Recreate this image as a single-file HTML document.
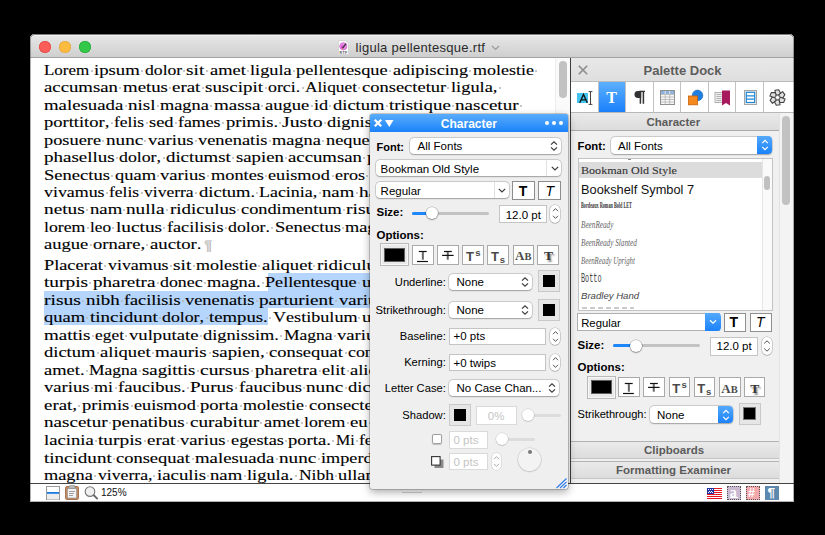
<!DOCTYPE html>
<html><head><meta charset="utf-8">
<style>
*{box-sizing:border-box;margin:0;padding:0}
html,body{width:825px;height:535px;overflow:hidden;background:#000}
body{position:relative;font-family:"Liberation Sans",sans-serif;font-size:11.5px;color:#000}
.a{position:absolute}
#win{position:absolute;left:30px;top:34px;width:764px;height:468px;background:#fff;border-radius:5px 5px 0 0;overflow:hidden}
#winedge{position:absolute;left:30px;top:34px;width:764px;height:468px;border-radius:5px 5px 0 0;box-shadow:inset 0 0 0 1px rgba(0,0,0,0.3);pointer-events:none}
#title{position:absolute;left:30px;top:34px;width:764px;height:24px;background:linear-gradient(#e8e8e8,#cfcfcf);border-bottom:1px solid #a3a3a3;border-radius:5px 5px 0 0;box-shadow:inset 0 1px 0 #b4b4b4,inset 0 2px 0 #f3f3f3}
.tl{position:absolute;top:41px;width:12px;height:12px;border-radius:50%}
#doc{position:absolute;left:0;top:0;width:825px;height:535px;overflow:hidden;clip-path:polygon(31px 58px,555px 58px,555px 483px,31px 483px)}
.ln{position:absolute;left:0;width:825px;height:17.5px;font-family:"Liberation Serif",serif;font-size:15px;line-height:17.5px;color:#000;font-kerning:none;-webkit-text-stroke:0.12px #000}
.ln .w{position:absolute;top:0;white-space:pre;transform-origin:0 0}
.ln s{position:absolute;top:8px;width:2px;height:2px;background:#b4b4b4;border-radius:1px}
.hl{position:absolute;background:#b5d5fc}
/* dock */
.hdr{position:absolute;background:linear-gradient(#eaeaea,#dcdcdc);border-bottom:1px solid #ababab;text-align:center;font-weight:bold;color:#5b5b5b}
.tb{position:absolute;top:82px;height:30px;background:#fff;border-right:1px solid #c3c3c3}
.lbl{position:absolute;white-space:pre;line-height:1}
.b{font-weight:bold}
.pop{position:absolute;background:#fff;border-radius:4px;box-shadow:0 0 0 0.5px rgba(0,0,0,0.22),0 0.5px 1.5px rgba(0,0,0,0.25)}
.fld{position:absolute;background:#fff;box-shadow:inset 0 0 0 1px #c4c4c4,inset 0 1px 0 #b4b4b4}
.btn{position:absolute;background:#fff;border-radius:2px;box-shadow:0 0 0 0.5px rgba(0,0,0,0.25),0 0.5px 1px rgba(0,0,0,0.2)}
.well{position:absolute;background:#e6e6e6;box-shadow:inset 0 0 0 1px #c9c9c9}
.well i{position:absolute;background:#000;box-shadow:0 0 0 1px #777}
.blue{position:absolute;background:linear-gradient(#54a9fb,#1b82fb);border-radius:0 4px 4px 0}
.trk{position:absolute;height:3px;border-radius:2px;background:#c3c3c3}
.knob{position:absolute;width:12px;height:12px;border-radius:50%;background:#fff;box-shadow:0 0 0 0.5px rgba(0,0,0,0.3),0 1px 1.5px rgba(0,0,0,0.3)}
.step{position:absolute;background:#fff;border-radius:5px;box-shadow:0 0 0 0.5px rgba(0,0,0,0.25),0 0.5px 1px rgba(0,0,0,0.2)}
svg{position:absolute;overflow:visible}
</style></head><body>
<div id="win"></div>
<div id="title"></div>
<div class="tl" style="left:39px;background:#fc5d58;box-shadow:inset 0 0 0 0.6px #e0443e"></div>
<div class="tl" style="left:59px;background:#fdbc40;box-shadow:inset 0 0 0 0.6px #dea236"></div>
<div class="tl" style="left:79px;background:#34c84a;box-shadow:inset 0 0 0 0.6px #1ea62f"></div>
<!-- title -->
<svg style="left:337.5px;top:39.5px" width="11" height="15" viewBox="0 0 11 15">
  <path d="M0.5 0.5h7l3 3v11h-10z" fill="#fdfdfd" stroke="#cfcfcf" stroke-width="0.8"/>
  <circle cx="5.3" cy="6.3" r="3.6" fill="#e68de6" stroke="#d46ad6" stroke-width="0.8"/>
  <circle cx="4.5" cy="7" r="1.8" fill="#e04fd8"/>
  <path d="M8 3.6L4.4 8.4" stroke="#3a3a3a" stroke-width="1.4"/>
  <path d="M4.6 8.2L3.8 9.2" stroke="#c9a64a" stroke-width="1"/>
  <text x="5.5" y="13.6" font-size="3.6" font-weight="bold" text-anchor="middle" fill="#555" font-family="Liberation Sans" letter-spacing="0.3">RTF</text>
</svg>
<div class="lbl" style="left:355.5px;top:41px;font-size:13px;color:#2a2a2a;letter-spacing:0.3px">ligula pellentesque.rtf</div>
<svg style="left:491px;top:45px" width="9" height="6" viewBox="0 0 9 6"><path d="M1 1l3.5 3.5L8 1" fill="none" stroke="#9a9a9a" stroke-width="1.2"/></svg>

<div id="doc">
<div class="hl" style="left:267.6px;top:273px;width:288px;height:17.6px"></div>
<div class="hl" style="left:43.7px;top:290.6px;width:512px;height:17.4px"></div>
<div class="hl" style="left:43.7px;top:308px;width:224px;height:17.4px"></div>
<div class="ln" style="top:61.80px"><span class="w" style="left:44.00px;transform:scaleX(1.1311)">Lorem</span><s style="left:90.59px"></s><span class="w" style="left:93.96px;transform:scaleX(1.2489)">ipsum</span><s style="left:141.14px"></s><span class="w" style="left:144.50px;transform:scaleX(1.1760)">dolor</span><s style="left:183.11px"></s><span class="w" style="left:186.48px;transform:scaleX(1.2918)">sit</span><s style="left:206.17px"></s><span class="w" style="left:209.54px;transform:scaleX(1.2268)">amet</span><s style="left:246.67px"></s><span class="w" style="left:250.03px;transform:scaleX(1.2197)">ligula</span><s style="left:293.08px"></s><span class="w" style="left:296.44px;transform:scaleX(1.2221)">pellentesque</span><s style="left:389.44px"></s><span class="w" style="left:392.81px;transform:scaleX(1.2178)">adipiscing</span><s style="left:469.26px"></s><span class="w" style="left:472.62px;transform:scaleX(1.1980)">molestie</span><s style="left:534.88px"></s></div>
<div class="ln" style="top:79.25px"><span class="w" style="left:44.00px;transform:scaleX(1.2496)">accumsan</span><s style="left:119.26px"></s><span class="w" style="left:122.63px;transform:scaleX(1.2535)">metus</span><s style="left:168.93px"></s><span class="w" style="left:172.29px;transform:scaleX(1.2621)">erat</span><s style="left:202.03px"></s><span class="w" style="left:205.40px;transform:scaleX(1.2638)">suscipit</span><s style="left:264.70px"></s><span class="w" style="left:268.06px;transform:scaleX(1.1899)">orci.</span><s style="left:301.65px"></s><span class="w" style="left:305.01px;transform:scaleX(1.1561)">Aliquet</span><s style="left:358.41px"></s><span class="w" style="left:361.77px;transform:scaleX(1.2332)">consectetur</span><s style="left:447.38px"></s><span class="w" style="left:450.75px;transform:scaleX(1.2238)">ligula,</span><s style="left:498.52px"></s></div>
<div class="ln" style="top:96.70px"><span class="w" style="left:44.00px;transform:scaleX(1.2513)">malesuada</span><s style="left:124.59px"></s><span class="w" style="left:127.95px;transform:scaleX(1.2676)">nisl</span><s style="left:156.81px"></s><span class="w" style="left:160.17px;transform:scaleX(1.2198)">magna</span><s style="left:210.31px"></s><span class="w" style="left:213.67px;transform:scaleX(1.2655)">massa</span><s style="left:261.45px"></s><span class="w" style="left:264.81px;transform:scaleX(1.2376)">augue</span><s style="left:310.52px"></s><span class="w" style="left:313.88px;transform:scaleX(1.2156)">id</span><s style="left:329.44px"></s><span class="w" style="left:332.80px;transform:scaleX(1.2343)">dictum</span><s style="left:385.60px"></s><span class="w" style="left:388.97px;transform:scaleX(1.2564)">tristique</span><s style="left:452.11px"></s><span class="w" style="left:455.48px;transform:scaleX(1.2715)">nascetur</span><s style="left:520.39px"></s></div>
<div class="ln" style="top:114.15px"><span class="w" style="left:44.00px;transform:scaleX(1.2344)">porttitor,</span><s style="left:110.69px"></s><span class="w" style="left:114.06px;transform:scaleX(1.1674)">felis</span><s style="left:145.57px"></s><span class="w" style="left:148.94px;transform:scaleX(1.2267)">sed</span><s style="left:174.84px"></s><span class="w" style="left:178.20px;transform:scaleX(1.1881)">fames</span><s style="left:222.13px"></s><span class="w" style="left:225.50px;transform:scaleX(1.2359)">primis.</span><s style="left:278.89px"></s><span class="w" style="left:282.25px;transform:scaleX(1.3130)">Justo</span><s style="left:324.12px"></s><span class="w" style="left:327.48px;transform:scaleX(1.2207)">dignissim</span><s style="left:400.08px"></s><span class="w" style="left:403.45px;transform:scaleX(1.2768)">nunc</span><s style="left:442.06px"></s></div>
<div class="ln" style="top:131.60px"><span class="w" style="left:44.00px;transform:scaleX(1.2228)">posuere</span><s style="left:102.42px"></s><span class="w" style="left:105.78px;transform:scaleX(1.2768)">nunc</span><s style="left:144.39px"></s><span class="w" style="left:147.76px;transform:scaleX(1.2413)">varius</span><s style="left:194.64px"></s><span class="w" style="left:198.01px;transform:scaleX(1.2261)">venenatis</span><s style="left:268.84px"></s><span class="w" style="left:272.20px;transform:scaleX(1.2198)">magna</span><s style="left:322.34px"></s><span class="w" style="left:325.71px;transform:scaleX(1.2211)">neque</span><s style="left:370.82px"></s><span class="w" style="left:374.19px;transform:scaleX(1.2494)">sapien</span><s style="left:423.44px"></s></div>
<div class="ln" style="top:149.05px"><span class="w" style="left:44.00px;transform:scaleX(1.2655)">phasellus</span><s style="left:116.01px"></s><span class="w" style="left:119.38px;transform:scaleX(1.1850)">dolor,</span><s style="left:162.72px"></s><span class="w" style="left:166.08px;transform:scaleX(1.2528)">dictumst</span><s style="left:232.18px"></s><span class="w" style="left:235.55px;transform:scaleX(1.2494)">sapien</span><s style="left:284.80px"></s><span class="w" style="left:288.17px;transform:scaleX(1.2496)">accumsan</span><s style="left:363.43px"></s><span class="w" style="left:366.80px;transform:scaleX(1.3032)">purus</span><s style="left:411.61px"></s></div>
<div class="ln" style="top:166.50px"><span class="w" style="left:44.00px;transform:scaleX(1.2361)">Senectus</span><s style="left:111.28px"></s><span class="w" style="left:114.65px;transform:scaleX(1.2328)">quam</span><s style="left:157.10px"></s><span class="w" style="left:160.47px;transform:scaleX(1.2413)">varius</span><s style="left:207.35px"></s><span class="w" style="left:210.72px;transform:scaleX(1.2208)">montes</span><s style="left:265.00px"></s><span class="w" style="left:268.36px;transform:scaleX(1.2151)">euismod</span><s style="left:331.51px"></s><span class="w" style="left:334.87px;transform:scaleX(1.2060)">eros</span><s style="left:366.39px"></s><span class="w" style="left:369.75px;transform:scaleX(1.2768)">nunc</span><s style="left:408.36px"></s></div>
<div class="ln" style="top:183.95px"><span class="w" style="left:44.00px;transform:scaleX(1.1918)">vivamus</span><s style="left:105.96px"></s><span class="w" style="left:109.33px;transform:scaleX(1.1674)">felis</span><s style="left:140.84px"></s><span class="w" style="left:144.21px;transform:scaleX(1.1689)">viverra</span><s style="left:195.23px"></s><span class="w" style="left:198.60px;transform:scaleX(1.2365)">dictum.</span><s style="left:256.13px"></s><span class="w" style="left:259.49px;transform:scaleX(1.1949)">Lacinia,</span><s style="left:319.09px"></s><span class="w" style="left:322.46px;transform:scaleX(1.2475)">nam</span><s style="left:356.04px"></s><span class="w" style="left:359.41px;transform:scaleX(1.2845)">habitant</span><s style="left:422.85px"></s></div>
<div class="ln" style="top:201.40px"><span class="w" style="left:44.00px;transform:scaleX(1.2880)">netus</span><s style="left:86.16px"></s><span class="w" style="left:89.52px;transform:scaleX(1.2475)">nam</span><s style="left:123.11px"></s><span class="w" style="left:126.47px;transform:scaleX(1.2809)">nulla</span><s style="left:166.27px"></s><span class="w" style="left:169.63px;transform:scaleX(1.2612)">ridiculus</span><s style="left:237.21px"></s><span class="w" style="left:240.57px;transform:scaleX(1.2218)">condimentum</span><s style="left:342.74px"></s><span class="w" style="left:346.10px;transform:scaleX(1.3036)">risus</span><s style="left:384.42px"></s><span class="w" style="left:387.78px;transform:scaleX(1.2198)">magna</span><s style="left:437.92px"></s></div>
<div class="ln" style="top:218.85px"><span class="w" style="left:44.00px;transform:scaleX(1.1824)">lorem</span><s style="left:86.75px"></s><span class="w" style="left:90.11px;transform:scaleX(1.1451)">leo</span><s style="left:112.47px"></s><span class="w" style="left:115.83px;transform:scaleX(1.2865)">luctus</span><s style="left:163.31px"></s><span class="w" style="left:166.67px;transform:scaleX(1.2101)">facilisis</span><s style="left:224.50px"></s><span class="w" style="left:227.86px;transform:scaleX(1.1850)">dolor.</span><s style="left:271.20px"></s><span class="w" style="left:274.57px;transform:scaleX(1.2361)">Senectus</span><s style="left:341.85px"></s><span class="w" style="left:345.22px;transform:scaleX(1.2198)">magna</span><s style="left:395.36px"></s></div>
<div class="ln" style="top:236.30px"><span class="w" style="left:44.00px;transform:scaleX(1.2376)">augue</span><s style="left:89.70px"></s><span class="w" style="left:93.07px;transform:scaleX(1.2369)">ornare,</span><s style="left:146.46px"></s><span class="w" style="left:149.82px;transform:scaleX(1.2474)">auctor.</span><span class="w" style="left:204.2px;top:0.5px;font-family:'Liberation Sans';font-weight:bold;font-size:14px;color:#d2d2d2">&#182;</span></div>
<div class="ln" style="top:256.70px"><span class="w" style="left:44.00px;transform:scaleX(1.2176)">Placerat</span><s style="left:104.19px"></s><span class="w" style="left:107.55px;transform:scaleX(1.1918)">vivamus</span><s style="left:169.52px"></s><span class="w" style="left:172.88px;transform:scaleX(1.2918)">sit</span><s style="left:192.57px"></s><span class="w" style="left:195.94px;transform:scaleX(1.1980)">molestie</span><s style="left:258.20px"></s><span class="w" style="left:261.56px;transform:scaleX(1.2381)">aliquet</span><s style="left:313.47px"></s><span class="w" style="left:316.84px;transform:scaleX(1.2612)">ridiculus</span><s style="left:384.42px"></s></div>
<div class="ln" style="top:274.23px"><span class="w" style="left:44.00px;transform:scaleX(1.2889)">turpis</span><s style="left:89.41px"></s><span class="w" style="left:92.77px;transform:scaleX(1.2692)">pharetra</span><s style="left:156.51px"></s><span class="w" style="left:159.88px;transform:scaleX(1.1881)">donec</span><s style="left:203.81px"></s><span class="w" style="left:207.17px;transform:scaleX(1.2234)">magna.</span><s style="left:262.04px"></s><span class="w" style="left:265.40px;transform:scaleX(1.2085)">Pellentesque</span><s style="left:358.41px"></s><span class="w" style="left:361.77px;transform:scaleX(1.2519)">ultrices</span><s style="left:418.41px"></s></div>
<div class="ln" style="top:291.76px"><span class="w" style="left:44.00px;transform:scaleX(1.3036)">risus</span><s style="left:82.31px"></s><span class="w" style="left:85.68px;transform:scaleX(1.2634)">nibh</span><s style="left:120.74px"></s><span class="w" style="left:124.11px;transform:scaleX(1.2101)">facilisis</span><s style="left:181.93px"></s><span class="w" style="left:185.30px;transform:scaleX(1.2261)">venenatis</span><s style="left:256.13px"></s><span class="w" style="left:259.49px;transform:scaleX(1.2774)">parturient</span><s style="left:335.35px"></s><span class="w" style="left:338.71px;transform:scaleX(1.2413)">varius</span><s style="left:385.60px"></s></div>
<div class="ln" style="top:309.29px"><span class="w" style="left:44.00px;transform:scaleX(1.2328)">quam</span><s style="left:86.45px"></s><span class="w" style="left:89.82px;transform:scaleX(1.2694)">tincidunt</span><s style="left:158.88px"></s><span class="w" style="left:162.24px;transform:scaleX(1.1850)">dolor,</span><s style="left:205.58px"></s><span class="w" style="left:208.94px;transform:scaleX(1.2491)">tempus.</span><s style="left:269.13px"></s><span class="w" style="left:272.50px;transform:scaleX(1.2077)">Vestibulum</span><s style="left:358.41px"></s><span class="w" style="left:361.77px;transform:scaleX(1.2519)">ultrices</span><s style="left:418.41px"></s></div>
<div class="ln" style="top:326.82px"><span class="w" style="left:44.00px;transform:scaleX(1.2655)">mattis</span><s style="left:91.77px"></s><span class="w" style="left:95.14px;transform:scaleX(1.1595)">eget</span><s style="left:125.47px"></s><span class="w" style="left:128.84px;transform:scaleX(1.2443)">vulputate</span><s style="left:199.67px"></s><span class="w" style="left:203.03px;transform:scaleX(1.2232)">dignissim.</span><s style="left:280.37px"></s><span class="w" style="left:283.73px;transform:scaleX(1.1638)">Magna</span><s style="left:333.57px"></s><span class="w" style="left:336.94px;transform:scaleX(1.2413)">varius</span><s style="left:383.83px"></s></div>
<div class="ln" style="top:344.35px"><span class="w" style="left:44.00px;transform:scaleX(1.2343)">dictum</span><s style="left:96.80px"></s><span class="w" style="left:100.16px;transform:scaleX(1.2381)">aliquet</span><s style="left:152.08px"></s><span class="w" style="left:155.44px;transform:scaleX(1.2670)">mauris</span><s style="left:208.54px"></s><span class="w" style="left:211.90px;transform:scaleX(1.2505)">sapien,</span><s style="left:265.88px"></s><span class="w" style="left:269.25px;transform:scaleX(1.2320)">consequat</span><s style="left:344.51px"></s><span class="w" style="left:347.88px;transform:scaleX(1.1871)">congue</span><s style="left:400.68px"></s></div>
<div class="ln" style="top:361.88px"><span class="w" style="left:44.00px;transform:scaleX(1.2307)">amet.</span><s style="left:85.86px"></s><span class="w" style="left:89.23px;transform:scaleX(1.1638)">Magna</span><s style="left:139.07px"></s><span class="w" style="left:142.43px;transform:scaleX(1.2515)">sagittis</span><s style="left:197.01px"></s><span class="w" style="left:200.37px;transform:scaleX(1.2957)">cursus</span><s style="left:251.40px"></s><span class="w" style="left:254.76px;transform:scaleX(1.2692)">pharetra</span><s style="left:318.50px"></s><span class="w" style="left:321.86px;transform:scaleX(1.2181)">elit</span><s style="left:346.58px"></s><span class="w" style="left:349.95px;transform:scaleX(1.2355)">aliquam</span><s style="left:411.02px"></s></div>
<div class="ln" style="top:379.41px"><span class="w" style="left:44.00px;transform:scaleX(1.2413)">varius</span><s style="left:90.89px"></s><span class="w" style="left:94.25px;transform:scaleX(1.1941)">mi</span><s style="left:114.54px"></s><span class="w" style="left:117.90px;transform:scaleX(1.2403)">faucibus.</span><s style="left:186.96px"></s><span class="w" style="left:190.32px;transform:scaleX(1.2710)">Purus</span><s style="left:235.14px"></s><span class="w" style="left:238.50px;transform:scaleX(1.2387)">faucibus</span><s style="left:302.83px"></s><span class="w" style="left:306.20px;transform:scaleX(1.2768)">nunc</span><s style="left:344.81px"></s><span class="w" style="left:348.17px;transform:scaleX(1.2343)">dictum</span><s style="left:400.97px"></s></div>
<div class="ln" style="top:396.94px"><span class="w" style="left:44.00px;transform:scaleX(1.2620)">erat,</span><s style="left:78.47px"></s><span class="w" style="left:81.84px;transform:scaleX(1.2335)">primis</span><s style="left:130.50px"></s><span class="w" style="left:133.86px;transform:scaleX(1.2151)">euismod</span><s style="left:197.01px"></s><span class="w" style="left:200.37px;transform:scaleX(1.2369)">porta</span><s style="left:239.87px"></s><span class="w" style="left:243.23px;transform:scaleX(1.1980)">molestie</span><s style="left:305.49px"></s><span class="w" style="left:308.86px;transform:scaleX(1.2332)">consectetur</span><s style="left:394.47px"></s></div>
<div class="ln" style="top:414.47px"><span class="w" style="left:44.00px;transform:scaleX(1.2715)">nascetur</span><s style="left:108.92px"></s><span class="w" style="left:112.28px;transform:scaleX(1.2647)">penatibus</span><s style="left:186.37px"></s><span class="w" style="left:189.73px;transform:scaleX(1.2776)">curabitur</span><s style="left:260.27px"></s><span class="w" style="left:263.63px;transform:scaleX(1.2268)">amet</span><s style="left:300.76px"></s><span class="w" style="left:304.13px;transform:scaleX(1.1824)">lorem</span><s style="left:346.88px"></s><span class="w" style="left:350.24px;transform:scaleX(1.2515)">eu</span><s style="left:369.34px"></s></div>
<div class="ln" style="top:432.00px"><span class="w" style="left:44.00px;transform:scaleX(1.2420)">lacinia</span><s style="left:95.03px"></s><span class="w" style="left:98.39px;transform:scaleX(1.2889)">turpis</span><s style="left:143.80px"></s><span class="w" style="left:147.16px;transform:scaleX(1.2621)">erat</span><s style="left:176.91px"></s><span class="w" style="left:180.27px;transform:scaleX(1.2413)">varius</span><s style="left:227.16px"></s><span class="w" style="left:230.52px;transform:scaleX(1.2212)">egestas</span><s style="left:284.80px"></s><span class="w" style="left:288.17px;transform:scaleX(1.2396)">porta.</span><s style="left:332.39px"></s><span class="w" style="left:335.76px;transform:scaleX(1.0632)">Mi</span><s style="left:355.74px"></s><span class="w" style="left:359.11px;transform:scaleX(1.1674)">felis</span><s style="left:390.63px"></s></div>
<div class="ln" style="top:449.53px"><span class="w" style="left:44.00px;transform:scaleX(1.2694)">tincidunt</span><s style="left:113.06px"></s><span class="w" style="left:116.42px;transform:scaleX(1.2320)">consequat</span><s style="left:191.69px"></s><span class="w" style="left:195.05px;transform:scaleX(1.2513)">malesuada</span><s style="left:275.64px"></s><span class="w" style="left:279.00px;transform:scaleX(1.2768)">nunc</span><s style="left:317.61px"></s><span class="w" style="left:320.98px;transform:scaleX(1.2136)">imperdiet</span><s style="left:392.10px"></s></div>
<div class="ln" style="top:467.06px"><span class="w" style="left:44.00px;transform:scaleX(1.2198)">magna</span><s style="left:94.14px"></s><span class="w" style="left:97.50px;transform:scaleX(1.1764)">viverra,</span><s style="left:153.26px"></s><span class="w" style="left:156.62px;transform:scaleX(1.2532)">iaculis</span><s style="left:207.06px"></s><span class="w" style="left:210.42px;transform:scaleX(1.2475)">nam</span><s style="left:244.01px"></s><span class="w" style="left:247.37px;transform:scaleX(1.2238)">ligula.</span><s style="left:295.15px"></s><span class="w" style="left:298.51px;transform:scaleX(1.1627)">Nibh</span><s style="left:334.76px"></s><span class="w" style="left:338.12px;transform:scaleX(1.2196)">ullamcorper</span><s style="left:427.87px"></s></div>
</div>
<!-- doc scrollbar -->
<div class="a" style="left:555px;top:58px;width:15px;height:425px;background:#fafafa;border-left:1px solid #ededed"></div>
<div class="a" style="left:559px;top:61px;width:8px;height:37px;border-radius:4px;background:#c2c2c2"></div>
<div class="a" style="left:570px;top:58px;width:1px;height:425px;background:#3c3c3c"></div>

<!-- DOCK -->
<div class="a" style="left:571px;top:58px;width:223px;height:425px;background:#f0f0f0"></div>
<div class="hdr" style="left:571px;top:58px;width:223px;height:24px;background:linear-gradient(#e8e8e8,#dfdfdf);border-bottom:1px solid #b9b9b9"></div>
<div class="lbl b" style="left:643.5px;top:63.6px;font-size:13px;color:#5d5d5d">Palette Dock</div>
<svg style="left:578px;top:65px" width="10" height="10" viewBox="0 0 10 10"><path d="M0.8 0.8L9.2 9.2M9.2 0.8L0.8 9.2" stroke="#8c8c8c" stroke-width="1.6"/></svg>
<div class="a" style="left:571px;top:81px;width:223px;height:1px;background:#bcbcbc"></div>
<div class="a" style="left:571px;top:82px;width:223px;height:30px;background:#fff"></div>
<div class="a" style="left:598px;top:82px;width:1px;height:30px;background:#c2c2c2"></div>
<div class="a" style="left:625px;top:82px;width:1px;height:30px;background:#c2c2c2"></div>
<div class="a" style="left:653px;top:82px;width:1px;height:30px;background:#c2c2c2"></div>
<div class="a" style="left:680px;top:82px;width:1px;height:30px;background:#c2c2c2"></div>
<div class="a" style="left:708px;top:82px;width:1px;height:30px;background:#c2c2c2"></div>
<div class="a" style="left:735px;top:82px;width:1px;height:30px;background:#c2c2c2"></div>
<div class="a" style="left:763px;top:82px;width:1px;height:30px;background:#c2c2c2"></div>
<div class="a" style="left:599px;top:82px;width:26px;height:30px;background:linear-gradient(#5cb0fc,#1a80fb)"></div>
<!-- 1: A with cursor -->
<div class="a" style="left:577px;top:93px;width:11px;height:10px;background:#42c6f1"></div>
<svg style="left:579px;top:93.5px" width="9" height="9" viewBox="0 0 9 9"><path d="M0.7 8.7L4.5 0.4L8.3 8.7M2.1 5.9h4.8" fill="none" stroke="#151515" stroke-width="1.35"/></svg>
<svg style="left:588px;top:91px" width="5" height="14" viewBox="0 0 5 14"><path d="M0.6 0.6h3.8M2.5 0.6v12.8M0.6 13.4h3.8" fill="none" stroke="#3a3a3a" stroke-width="0.95"/></svg>
<!-- 2: T -->
<div class="lbl" style="left:606.3px;top:90px;font-family:'Liberation Serif',serif;font-weight:bold;font-size:16px;color:#fff">T</div>
<!-- 3: pilcrow -->
<svg style="left:634px;top:90px" width="12" height="15" viewBox="0 0 12 15">
  <path d="M7.2 1.1H3.9A3.3 3.3 0 0 0 3.9 7.9H7.2z" fill="#333"/>
  <path d="M6.4 1.1v12.6M9.4 1.1v12.6" stroke="#333" stroke-width="1.5"/>
  <path d="M5.5 1.4h5.4" stroke="#333" stroke-width="1.4"/>
</svg>
<!-- 4: table -->
<svg style="left:660px;top:90px" width="15" height="15" viewBox="0 0 15 15">
  <rect x="0.5" y="0.5" width="14" height="14" fill="#f7f7f7" stroke="#8e8e8e"/>
  <rect x="1" y="1" width="13" height="3.2" fill="#8fb2dc"/>
  <path d="M5.2 1v13.5M9.7 1v13.5M1 4.5h13.5M1 7h13.5M1 9.5h13.5M1 12h13.5" stroke="#b9b9b9" stroke-width="0.9"/>
  <path d="M5.2 1v3.2M9.7 1v3.2" stroke="#d8e6f5" stroke-width="0.9"/>
</svg>
<!-- 5: shapes -->
<svg style="left:687px;top:89px" width="17" height="17" viewBox="0 0 17 17">
  <circle cx="10.5" cy="6.4" r="5.3" fill="#1f7ee0" stroke="#1363b8" stroke-width="0.6"/>
  <rect x="1.5" y="7" width="9" height="8.8" fill="#f5891f" stroke="#c8600c" stroke-width="0.8"/>
</svg>
<!-- 6: bookmark -->
<svg style="left:714px;top:89.5px" width="17" height="16" viewBox="0 0 17 16">
  <rect x="1" y="2.5" width="8" height="10" fill="#eee" stroke="#a0a0a0" stroke-width="0.8"/>
  <path d="M2.5 4.5h5M2.5 6.5h5M2.5 8.5h5M2.5 10.5h5" stroke="#9a9a9a" stroke-width="0.7"/>
  <path d="M8 0.5h8v15l-4-2.5l-4 2.5z" fill="#a81a5e"/>
</svg>
<!-- 7: list -->
<svg style="left:744px;top:90px" width="13" height="15" viewBox="0 0 13 15">
  <rect x="0.5" y="0.5" width="12" height="14" fill="#f4f4f4" stroke="#a4a4a4"/>
  <rect x="2.3" y="2.3" width="8.4" height="10.2" fill="#fff" stroke="#1c86d6" stroke-width="1.2"/>
  <path d="M2.3 5.8h8.4M2.3 9.1h8.4" stroke="#1c86d6" stroke-width="1.2"/>
</svg>
<!-- 8: gear/snowflake -->
<svg style="left:768.5px;top:88.5px" width="17" height="17" viewBox="-8.5 -8.5 17 17">
  <g id="lobe"><path d="M-1.6 -2.4L-2.6 -7.3L1.2 -7.8L3 -4.6L1.6 -2.4z" fill="#e0e0e0" stroke="#444" stroke-width="1.1" stroke-linejoin="round"/></g>
  <use href="#lobe" transform="rotate(60)"/><use href="#lobe" transform="rotate(120)"/><use href="#lobe" transform="rotate(180)"/><use href="#lobe" transform="rotate(240)"/><use href="#lobe" transform="rotate(300)"/>
  <circle cx="0" cy="0" r="2" fill="#fff" stroke="#666" stroke-width="0.6"/>
</svg>

<div class="a" style="left:571px;top:112px;width:223px;height:1px;background:#b7b7b7"></div>
<div class="hdr" style="left:571px;top:113px;width:208px;height:18px"></div>
<div class="lbl b" style="left:646.5px;top:117px;font-size:11.5px;color:#5b5b5b">Character</div>
<div class="a" style="left:779px;top:113px;width:15px;height:370px;background:#f3f3f3;border-left:1px solid #e3e3e3"></div>
<div class="a" style="left:782px;top:116px;width:8px;height:89px;border-radius:4px;background:#c2c2c2"></div>

<div class="lbl b" style="left:577.5px;top:140.6px;font-size:11.3px">Font:</div>
<div class="pop" style="left:610.5px;top:136.5px;width:161px;height:17px"></div>
<div class="blue" style="left:757px;top:136px;width:14.8px;height:17.6px"></div>
<svg style="left:760.5px;top:139px" width="8" height="12" viewBox="0 0 8 12"><path d="M1.2 4.2L4 1.4l2.8 2.8M1.2 7.8L4 10.6l2.8-2.8" fill="none" stroke="#fff" stroke-width="1.2"/></svg>
<div class="lbl" style="left:618px;top:140.5px;font-size:11.5px">All Fonts</div>
<!-- font list -->
<div class="a" style="left:577.5px;top:158px;width:195px;height:152.5px;background:#fff;box-shadow:inset 0 0 0 1px #c3c3c3"></div>
<div class="a" style="left:761.5px;top:159px;width:10px;height:150.5px;background:#fafafa;border-left:1px solid #e6e6e6"></div>
<div class="a" style="left:764px;top:176px;width:6px;height:14px;border-radius:3px;background:#c0c0c0"></div>
<div class="a" style="left:578.5px;top:162.3px;width:183px;height:16px;background:#dcdcdc"></div>
<div class="a" style="left:628px;top:158.5px;width:3px;height:1.5px;background:#888"></div>
<div class="lbl" style="left:581px;top:166.3px;font-family:'Liberation Serif',serif;font-size:10.6px;color:#333;transform-origin:0 0;transform:scaleX(1.14);-webkit-text-stroke:0.1px #333">Bookman Old Style</div>
<div class="lbl" style="left:581px;top:183.5px;font-size:12.8px;color:#111">Bookshelf Symbol 7</div>
<div class="lbl" style="left:581px;top:201px;font-family:'Liberation Serif',serif;font-weight:bold;font-size:9px;color:#333;transform-origin:0 0;transform:scaleX(0.47)">Bordeaux Roman Bold LET</div>
<div class="lbl" style="left:581px;top:220px;font-family:'Liberation Serif',serif;font-style:italic;font-size:10px;color:#666;transform-origin:0 0;transform:scaleX(0.72)">BeenReady</div>
<div class="lbl" style="left:581px;top:238px;font-family:'Liberation Serif',serif;font-style:italic;font-size:10px;color:#666;transform-origin:0 0;transform:scaleX(0.72)">BeenReady Slanted</div>
<div class="lbl" style="left:581px;top:255.5px;font-family:'Liberation Serif',serif;font-style:italic;font-size:10px;color:#666;transform-origin:0 0;transform:scaleX(0.68)">BeenReady Upright</div>
<div class="lbl" style="left:581px;top:272.5px;font-family:'Liberation Mono',monospace;font-size:12px;color:#444;transform-origin:0 0;transform:scaleX(0.57)">Botto</div>
<div class="lbl" style="left:581px;top:291px;font-family:'Liberation Sans',sans-serif;font-style:italic;font-size:9.6px;color:#444">Bradley Hand</div>
<div class="a" style="left:582px;top:307px;width:52px;height:2px;background:repeating-linear-gradient(90deg,#ccc 0 5px,transparent 5px 8px)"></div>
<!-- Regular -->
<div class="a" style="left:577.2px;top:313.3px;width:143px;height:17.6px;background:#fff;box-shadow:inset 0 0 0 1px #b0b0b0"></div>
<div class="blue" style="left:705px;top:313px;width:16px;height:18px"></div>
<svg style="left:709px;top:318.5px" width="8" height="6" viewBox="0 0 8 6"><path d="M1 1.2L4 4.2l3-3" fill="none" stroke="#fff" stroke-width="1.3"/></svg>
<div class="lbl" style="left:581.2px;top:318px;font-size:11.3px">Regular</div>
<div class="btn" style="left:723.5px;top:312.5px;width:22px;height:19px;border-radius:0;box-shadow:inset 0 0 0 1px #8f8f8f"></div>
<div class="lbl b" style="left:729.6px;top:315.4px;font-size:14px">T</div>
<div class="btn" style="left:749.5px;top:312.5px;width:22px;height:19px;border-radius:0;box-shadow:inset 0 0 0 1px #8f8f8f"></div>
<div class="lbl" style="left:756px;top:315.4px;font-size:14px;font-style:italic">T</div>
<!-- Size -->
<div class="lbl b" style="left:577.5px;top:339.5px;font-size:11.5px">Size:</div>
<div class="trk" style="left:613px;top:344px;width:87px"></div>
<div class="trk" style="left:613px;top:344px;width:24px;background:#1d86f9"></div>
<div class="knob" style="left:630px;top:339.5px"></div>
<div class="fld" style="left:710px;top:336.5px;width:48px;height:19px"></div>
<div class="lbl" style="left:716.5px;top:341px;font-size:11.5px">12.0 pt</div>
<div class="step" style="left:761.5px;top:336.5px;width:10px;height:18px"></div>
<svg style="left:762.5px;top:338.5px" width="8" height="14" viewBox="0 0 8 14"><path d="M1.2 4.5L4 1.8l2.8 2.7M1.2 9.5L4 12.2l2.8-2.7" fill="none" stroke="#555" stroke-width="1"/></svg>
<!-- Options -->
<div class="lbl b" style="left:577.5px;top:361.5px;font-size:11.5px">Options:</div>
<div class="a" style="left:586.5px;top:375.5px;width:29px;height:23px;background:#e9e9e9;box-shadow:inset 0 0 0 1px #b9b9b9,inset 0 0 0 2px #f7f7f7"></div>
<div class="a" style="left:590.5px;top:380.0px;width:21px;height:14px;background:#000;box-shadow:inset 0 0 0 1px #5e5e5e"></div>
<div class="a" style="left:618.3px;top:377.2px;width:21.7px;height:19.5px;background:#fff;box-shadow:inset 0 0 0 1px #a9a9a9"></div>
<div class="a" style="left:643.3px;top:377.2px;width:21.7px;height:19.5px;background:#fff;box-shadow:inset 0 0 0 1px #a9a9a9"></div>
<div class="a" style="left:668.6px;top:377.2px;width:21.7px;height:19.5px;background:#fff;box-shadow:inset 0 0 0 1px #a9a9a9"></div>
<div class="a" style="left:693.6px;top:377.2px;width:21.7px;height:19.5px;background:#fff;box-shadow:inset 0 0 0 1px #a9a9a9"></div>
<div class="a" style="left:719.1px;top:377.2px;width:21.7px;height:19.5px;background:#fff;box-shadow:inset 0 0 0 1px #a9a9a9"></div>
<div class="a" style="left:743.7px;top:377.2px;width:21.7px;height:19.5px;background:#fff;box-shadow:inset 0 0 0 1px #a9a9a9"></div>
<svg style="left:622.3px;top:381.2px" width="13" height="14" viewBox="0 0 13 14"><path d="M2.8 2.5h7.9" stroke="#111" stroke-width="1.2"/><path d="M6.85 3v7.7" stroke="#666" stroke-width="2"/><path d="M1 12.5h10.9" stroke="#111" stroke-width="1.2"/></svg>
<svg style="left:647.3px;top:381.2px" width="13" height="14" viewBox="0 0 13 14"><path d="M3 2.5h7.8" stroke="#111" stroke-width="1.2"/><path d="M6.75 3v7.7" stroke="#666" stroke-width="2"/><path d="M1.1 6.4h11.5" stroke="#111" stroke-width="1.2"/></svg>
<div class="lbl" style="left:672.3px;top:381.8px;font-size:13px;font-weight:bold;color:#4a4a4a">T</div>
<div class="lbl" style="left:681.6px;top:379.8px;font-size:9.5px;font-weight:bold;color:#4a4a4a">s</div>
<div class="lbl" style="left:697.3px;top:381.8px;font-size:13px;font-weight:bold;color:#4a4a4a">T</div>
<div class="lbl" style="left:706.1px;top:386.8px;font-size:9.5px;font-weight:bold;color:#4a4a4a">s</div>
<div class="lbl" style="left:721.3px;top:381.5px;font-family:'Liberation Serif',serif;font-weight:bold;font-size:13px;color:#4a4a4a">A<span style="font-size:10.5px">B</span></div>
<div class="lbl" style="left:750.3px;top:381.5px;font-family:'Liberation Serif',serif;font-weight:bold;font-size:13.5px;color:#333;text-shadow:1.5px 1.5px 1.5px #888">T</div>
<!-- Strikethrough -->
<div class="lbl" style="left:577.5px;top:408.6px;font-size:11.1px">Strikethrough:</div>
<div class="pop" style="left:649.5px;top:406px;width:83px;height:16.5px"></div>
<div class="blue" style="left:718px;top:405.5px;width:14.8px;height:17px"></div>
<svg style="left:721.5px;top:408.5px" width="8" height="12" viewBox="0 0 8 12"><path d="M1.2 4.2L4 1.4l2.8 2.8M1.2 7.8L4 10.6l2.8-2.8" fill="none" stroke="#fff" stroke-width="1.2"/></svg>
<div class="lbl" style="left:657px;top:409.5px;font-size:11.5px">None</div>
<div class="well" style="left:738.5px;top:402.5px;width:22px;height:22px"><i style="left:5.5px;top:5.5px;width:11px;height:11px"></i></div>


<div class="hdr" style="left:571px;top:441px;width:208px;height:18px;border-top:1px solid #b3b3b3;border-bottom:1px solid #c5c5c5"></div>
<div class="lbl b" style="left:644px;top:444.5px;color:#5b5b5b">Clipboards</div>
<div class="hdr" style="left:571px;top:461px;width:208px;height:18px;border-top:1px solid #b3b3b3;border-bottom:1px solid #c5c5c5"></div>
<div class="lbl b" style="left:616px;top:464.5px;color:#5b5b5b">Formatting Examiner</div>

<!-- status bar -->
<div class="a" style="left:30px;top:483px;width:764px;height:1px;background:#444"></div>
<svg style="left:46px;top:486px" width="14" height="14" viewBox="0 0 14 14">
  <rect x="0.5" y="0.5" width="13" height="13" fill="#fff" stroke="#9a9a9a"/>
  <rect x="1" y="7" width="12" height="6.5" fill="#ececec"/>
  <rect x="1" y="6" width="12" height="1.8" fill="#1c7be0"/>
</svg>
<svg style="left:65px;top:485px" width="14" height="15" viewBox="0 0 14 15">
  <rect x="0.6" y="1.6" width="12.8" height="12.8" rx="1" fill="#c8906a" stroke="#a36c45" stroke-width="1"/>
  <rect x="2.5" y="3.5" width="9" height="9.5" fill="#f4f4f4" stroke="#8a8a8a" stroke-width="0.6"/>
  <rect x="4" y="0.5" width="6" height="3" rx="1" fill="#b9b9b9" stroke="#8a8a8a" stroke-width="0.6"/>
  <path d="M4 6.5h6M4 8.5h5M4 10.5h4" stroke="#8a8a8a" stroke-width="0.8"/>
</svg>
<svg style="left:83.5px;top:486px" width="15" height="14" viewBox="0 0 15 14">
  <circle cx="6" cy="5.6" r="4.8" fill="#f0f0f0" stroke="#777" stroke-width="1.1"/>
  <path d="M9.5 9l4.2 4.2" stroke="#666" stroke-width="1.8"/>
</svg>
<div class="lbl" style="left:101px;top:487.5px;font-size:10px;color:#111">125%</div>
<!-- right icons -->
<svg style="left:707px;top:488px" width="15" height="11" viewBox="0 0 15 11" shape-rendering="crispEdges">
  <rect x="0" y="0" width="15" height="11" fill="#fff"/>
  <g fill="#e4161f"><rect x="0" y="0" width="15" height="1"/><rect x="0" y="2" width="15" height="1"/><rect x="0" y="4" width="15" height="1"/><rect x="0" y="6" width="15" height="1"/><rect x="0" y="8" width="15" height="1"/><rect x="0" y="10" width="15" height="1"/></g>
  <rect x="0" y="0" width="7" height="6" fill="#23319e"/>
  <g fill="#fff"><rect x="1" y="1" width="1" height="1"/><rect x="3" y="1" width="1" height="1"/><rect x="5" y="1" width="1" height="1"/><rect x="2" y="3" width="1" height="1"/><rect x="4" y="3" width="1" height="1"/><rect x="1" y="4" width="1" height="1"/><rect x="3" y="4" width="1" height="1"/><rect x="5" y="4" width="1" height="1"/></g>
</svg>
<div class="a" style="left:727px;top:486px;width:14px;height:14px;background:#cbbad2;border:1px dotted #555"></div>
<div class="lbl" style="left:729.8px;top:485.5px;font-family:'Liberation Serif',serif;font-weight:bold;font-size:14px;color:#fff">a</div>
<div class="a" style="left:730px;top:497px;width:8px;height:1px;background:#fff"></div>
<div class="a" style="left:746px;top:486px;width:14px;height:14px;background:#f3a8ab;border:1px dotted #555"></div>
<div class="lbl" style="left:748px;top:487px;font-weight:bold;font-size:12.5px;color:#fff">#</div>
<div class="a" style="left:765px;top:486px;width:14px;height:14px;background:#5d89ae"></div>
<div class="lbl" style="left:767.6px;top:486.2px;font-weight:bold;font-size:13.5px;color:#fff">&#182;</div>


<div class="a" style="left:369.5px;top:114px;width:198px;height:374.5px;background:#efefef;border-radius:2px;box-shadow:0 0 0 0.5px rgba(0,0,0,0.35),0 3px 9px rgba(0,0,0,0.35)"></div>
<div class="a" style="left:369.5px;top:114px;width:198px;height:17.5px;background:linear-gradient(#5aacfb,#1a83fb);border-radius:2px 2px 0 0"></div>
<svg style="left:374px;top:119.3px" width="8" height="8" viewBox="0 0 8 8"><path d="M0.8 0.8L7.2 7.2M7.2 0.8L0.8 7.2" stroke="#fff" stroke-width="2.2"/></svg>
<svg style="left:385px;top:119.5px" width="8.5" height="7" viewBox="0 0 8.5 7"><path d="M0 0h8.5L4.25 7z" fill="#fff"/></svg>
<div class="lbl" style="left:440.8px;top:118.00px;font-size:12px;font-weight:bold;color:#fff">Character</div>
<div class="a" style="left:544.5px;top:121.2px;width:4px;height:4px;border-radius:50%;background:#fff"></div>
<div class="a" style="left:551.5px;top:121.2px;width:4px;height:4px;border-radius:50%;background:#fff"></div>
<div class="a" style="left:558.5px;top:121.2px;width:4px;height:4px;border-radius:50%;background:#fff"></div>
<div class="lbl" style="left:376.5px;top:141.54px;font-size:11px;font-weight:bold">Font:</div>
<div class="pop" style="left:409.5px;top:137.8px;width:151.0px;height:16.5px;"></div>
<div class="lbl" style="left:417.6px;top:141.27px;font-size:11.5px;">All Fonts</div>
<svg style="left:549.5px;top:141px" width="8" height="10" viewBox="0 0 8 10"><path d="M1 3.6L4 0.8l3 2.8M1 6.4L4 9.2l3-2.8" fill="none" stroke="#3a3a3a" stroke-width="1.2"/></svg>
<div class="pop" style="left:376.3px;top:159.5px;width:184.8px;height:16.7px;"></div>
<div class="a" style="left:546.2px;top:160.0px;width:1.0px;height:15.7px;background:#e0e0e0"></div>
<div class="lbl" style="left:380.6px;top:163.77px;font-size:11.5px;">Bookman Old Style</div>
<svg style="left:550.5px;top:165.8px" width="8" height="5" viewBox="0 0 8 5"><path d="M0.8 0.8L4 4l3.2-3.2" fill="none" stroke="#3a3a3a" stroke-width="1.2"/></svg>
<div class="pop" style="left:376.3px;top:181.5px;width:132.8px;height:16.5px;"></div>
<div class="a" style="left:494.3px;top:182.0px;width:1.0px;height:15.5px;background:#e0e0e0"></div>
<div class="lbl" style="left:380.6px;top:186.27px;font-size:11.5px;">Regular</div>
<svg style="left:498.3px;top:188px" width="8" height="5" viewBox="0 0 8 5"><path d="M0.8 0.8L4 4l3.2-3.2" fill="none" stroke="#3a3a3a" stroke-width="1.2"/></svg>
<div class="a" style="left:512.2px;top:180.5px;width:22.4px;height:19.5px;background:#fff;box-shadow:inset 0 0 0 1px #8d8d8d"></div>
<div class="lbl" style="left:518.8px;top:183.61px;font-size:14px;font-weight:bold">T</div>
<div class="a" style="left:538.4px;top:180.5px;width:22.2px;height:19.5px;background:#fff;box-shadow:inset 0 0 0 1px #8d8d8d"></div>
<div class="lbl" style="left:545.4px;top:183.61px;font-size:14px;font-style:italic">T</div>
<div class="lbl" style="left:376.5px;top:207.37px;font-size:11.5px;font-weight:bold">Size:</div>
<div class="trk" style="left:412.0px;top:211.8px;width:77.0px;height:3.0px;"></div>
<div class="trk" style="left:412.0px;top:211.8px;width:20.0px;height:3.0px;background:#1d86f9"></div>
<div class="knob" style="left:426.4px;top:207.3px"></div>
<div class="fld" style="left:499.0px;top:204.7px;width:47.5px;height:18.8px;"></div>
<div class="lbl" style="left:505.7px;top:209.67px;font-size:11.5px;">12.0 pt</div>
<div class="step" style="left:550.2px;top:205.0px;width:10.2px;height:17.8px;"></div><svg style="left:551.8px;top:207.4px" width="7" height="13" viewBox="0 0 7 13"><path d="M1 4.2L3.5 1.6L6 4.2M1 8.8L3.5 11.4L6 8.8" fill="none" stroke="#555" stroke-width="1"/></svg>
<div class="lbl" style="left:376.5px;top:229.67px;font-size:11.5px;font-weight:bold">Options:</div>
<div class="a" style="left:380.2px;top:243.3px;width:29px;height:23px;background:#e9e9e9;box-shadow:inset 0 0 0 1px #b9b9b9,inset 0 0 0 2px #f7f7f7"></div>
<div class="a" style="left:384.2px;top:247.8px;width:21px;height:14px;background:#000;box-shadow:inset 0 0 0 1px #5e5e5e"></div>
<div class="a" style="left:412.0px;top:245.0px;width:21.7px;height:19.5px;background:#fff;box-shadow:inset 0 0 0 1px #a9a9a9"></div>
<div class="a" style="left:437.0px;top:245.0px;width:21.7px;height:19.5px;background:#fff;box-shadow:inset 0 0 0 1px #a9a9a9"></div>
<div class="a" style="left:462.3px;top:245.0px;width:21.7px;height:19.5px;background:#fff;box-shadow:inset 0 0 0 1px #a9a9a9"></div>
<div class="a" style="left:487.3px;top:245.0px;width:21.7px;height:19.5px;background:#fff;box-shadow:inset 0 0 0 1px #a9a9a9"></div>
<div class="a" style="left:512.8px;top:245.0px;width:21.7px;height:19.5px;background:#fff;box-shadow:inset 0 0 0 1px #a9a9a9"></div>
<div class="a" style="left:537.4px;top:245.0px;width:21.7px;height:19.5px;background:#fff;box-shadow:inset 0 0 0 1px #a9a9a9"></div>
<svg style="left:416.0px;top:249.0px" width="13" height="14" viewBox="0 0 13 14"><path d="M2.8 2.5h7.9" stroke="#111" stroke-width="1.2"/><path d="M6.85 3v7.7" stroke="#666" stroke-width="2"/><path d="M1 12.5h10.9" stroke="#111" stroke-width="1.2"/></svg>
<svg style="left:441.0px;top:249.0px" width="13" height="14" viewBox="0 0 13 14"><path d="M3 2.5h7.8" stroke="#111" stroke-width="1.2"/><path d="M6.75 3v7.7" stroke="#666" stroke-width="2"/><path d="M1.1 6.4h11.5" stroke="#111" stroke-width="1.2"/></svg>
<div class="lbl" style="left:466.0px;top:249.6px;font-size:13px;font-weight:bold;color:#4a4a4a">T</div>
<div class="lbl" style="left:475.3px;top:247.6px;font-size:9.5px;font-weight:bold;color:#4a4a4a">s</div>
<div class="lbl" style="left:491.0px;top:249.6px;font-size:13px;font-weight:bold;color:#4a4a4a">T</div>
<div class="lbl" style="left:499.8px;top:254.6px;font-size:9.5px;font-weight:bold;color:#4a4a4a">s</div>
<div class="lbl" style="left:515.0px;top:249.3px;font-family:'Liberation Serif',serif;font-weight:bold;font-size:13px;color:#4a4a4a">A<span style="font-size:10.5px">B</span></div>
<div class="lbl" style="left:544.0px;top:249.3px;font-family:'Liberation Serif',serif;font-weight:bold;font-size:13.5px;color:#333;text-shadow:1.5px 1.5px 1.5px #888">T</div>
<div class="lbl" style="right:379.2px;top:276.99px;font-size:11.2px;">Underline:</div>
<div class="pop" style="left:448.5px;top:273.6px;width:83.2px;height:16.8px;"></div>
<div class="lbl" style="left:456.5px;top:277.07px;font-size:11.5px;">None</div>
<svg style="left:520.5px;top:277.3px" width="8" height="10" viewBox="0 0 8 10"><path d="M1 3.6L4 0.8l3 2.8M1 6.4L4 9.2l3-2.8" fill="none" stroke="#3a3a3a" stroke-width="1.2"/></svg>
<div class="well" style="left:537.5px;top:270.3px;width:22.2px;height:22.2px;"></div>
<div class="a" style="left:542.6px;top:275.2px;width:12.0px;height:12.0px;background:#000"></div>
<div class="lbl" style="right:379.2px;top:305.02px;font-size:11.3px;">Strikethrough:</div>
<div class="pop" style="left:448.5px;top:301.6px;width:83.2px;height:16.9px;"></div>
<div class="lbl" style="left:456.5px;top:305.07px;font-size:11.5px;">None</div>
<svg style="left:520.5px;top:305.3px" width="8" height="10" viewBox="0 0 8 10"><path d="M1 3.6L4 0.8l3 2.8M1 6.4L4 9.2l3-2.8" fill="none" stroke="#3a3a3a" stroke-width="1.2"/></svg>
<div class="well" style="left:537.5px;top:298.8px;width:22.2px;height:22.0px;"></div>
<div class="a" style="left:542.6px;top:303.8px;width:12.0px;height:12.0px;background:#000"></div>
<div class="lbl" style="right:379.2px;top:331.29px;font-size:11.2px;">Baseline:</div>
<div class="fld" style="left:448.5px;top:327.7px;width:97.9px;height:17.8px;"></div>
<div class="lbl" style="left:453.5px;top:331.47px;font-size:11.5px;">+0 pts</div>
<div class="step" style="left:550.2px;top:328.0px;width:10.2px;height:17.3px;"></div><svg style="left:551.8px;top:330.1px" width="7" height="13" viewBox="0 0 7 13"><path d="M1 4.2L3.5 1.6L6 4.2M1 8.8L3.5 11.4L6 8.8" fill="none" stroke="#555" stroke-width="1"/></svg>
<div class="lbl" style="right:379.2px;top:357.49px;font-size:11.2px;">Kerning:</div>
<div class="fld" style="left:448.5px;top:353.6px;width:97.9px;height:17.8px;"></div>
<div class="lbl" style="left:453.5px;top:357.67px;font-size:11.5px;">+0 twips</div>
<div class="step" style="left:550.2px;top:354.0px;width:10.2px;height:17.2px;"></div><svg style="left:551.8px;top:356.1px" width="7" height="13" viewBox="0 0 7 13"><path d="M1 4.2L3.5 1.6L6 4.2M1 8.8L3.5 11.4L6 8.8" fill="none" stroke="#555" stroke-width="1"/></svg>
<div class="lbl" style="right:379.2px;top:382.99px;font-size:11.2px;">Letter Case:</div>
<div class="pop" style="left:449.0px;top:379.6px;width:110.2px;height:16.3px;"></div>
<div class="lbl" style="left:456.5px;top:383.07px;font-size:11.5px;">No Case Chan...</div>
<svg style="left:548.3px;top:383.2px" width="8" height="10" viewBox="0 0 8 10"><path d="M1 3.6L4 0.8l3 2.8M1 6.4L4 9.2l3-2.8" fill="none" stroke="#3a3a3a" stroke-width="1.2"/></svg>
<div class="lbl" style="right:379.2px;top:410.49px;font-size:11.2px;">Shadow:</div>
<div class="well" style="left:448.5px;top:404.3px;width:22.1px;height:22.1px;"></div>
<div class="a" style="left:453.6px;top:409.4px;width:12.0px;height:12.0px;background:#000"></div>
<div class="fld" style="left:476.2px;top:406.0px;width:40.7px;height:18.6px;box-shadow:inset 0 0 0 1px #dadada"></div>
<div class="lbl" style="left:487.8px;top:410.67px;font-size:11.5px;color:#c4c4c4">0%</div>
<div class="trk" style="left:522.0px;top:414.0px;width:39.4px;height:3.0px;background:#dcdcdc"></div>
<div class="knob" style="left:521.8px;top:409.2px;box-shadow:0 0 0 0.5px rgba(0,0,0,0.15),0 1px 1px rgba(0,0,0,0.12)"></div>
<div class="a" style="left:431.7px;top:434.0px;width:10.1px;height:10.2px;background:#fff;box-shadow:inset 0 0 0 1px #a0a0a0,0 0.5px 1px rgba(0,0,0,0.2);border-radius:2px"></div>
<div class="fld" style="left:448.5px;top:430.5px;width:39.9px;height:18.3px;box-shadow:inset 0 0 0 1px #dadada"></div>
<div class="lbl" style="left:453.5px;top:434.77px;font-size:11.5px;color:#c4c4c4">0 pts</div>
<div class="trk" style="left:497.3px;top:437.5px;width:38.2px;height:3.0px;background:#dcdcdc"></div>
<div class="knob" style="left:496.4px;top:433px;box-shadow:0 0 0 0.5px rgba(0,0,0,0.15),0 1px 1px rgba(0,0,0,0.12)"></div>
<svg style="left:431px;top:456px" width="13" height="12" viewBox="0 0 13 12"><rect x="3.5" y="3.5" width="9" height="8.5" fill="#8a8a8a"/><rect x="0.6" y="0.6" width="8.5" height="8.5" fill="#fff" stroke="#333" stroke-width="1.1"/></svg>
<div class="fld" style="left:448.5px;top:452.6px;width:39.9px;height:17.8px;box-shadow:inset 0 0 0 1px #dadada"></div>
<div class="lbl" style="left:453.5px;top:456.77px;font-size:11.5px;color:#c4c4c4">0 pts</div>
<div class="step" style="left:491.7px;top:453.0px;width:9.3px;height:17.2px;box-shadow:0 0 0 0.5px rgba(0,0,0,0.15)"></div>
<svg style="left:493px;top:455px" width="7" height="13" viewBox="0 0 7 13"><path d="M1 4.2L3.5 1.6L6 4.2M1 8.8L3.5 11.4L6 8.8" fill="none" stroke="#aaa" stroke-width="1"/></svg>
<div class="a" style="left:518.4px;top:448.2px;width:23px;height:23px;border-radius:50%;background:#f3f3f3;box-shadow:0 0 0 0.6px rgba(0,0,0,0.14),0 1px 1.5px rgba(0,0,0,0.12)"></div>
<div class="a" style="left:528.4px;top:449.8px;width:4px;height:4px;border-radius:50%;background:#7a7a7a"></div>
<div class="a" style="left:402px;top:491.5px;width:20px;height:1px;background:#b0b0b0"></div>
<svg style="left:555.5px;top:477.5px" width="11" height="10" viewBox="0 0 11 10"><path d="M10.5 0.5L0.5 10M10.5 3.8L4 10M10.5 7L7.3 10" stroke="#2a7be8" stroke-width="1.1"/></svg>
<div id="winedge"></div>
</body></html>
